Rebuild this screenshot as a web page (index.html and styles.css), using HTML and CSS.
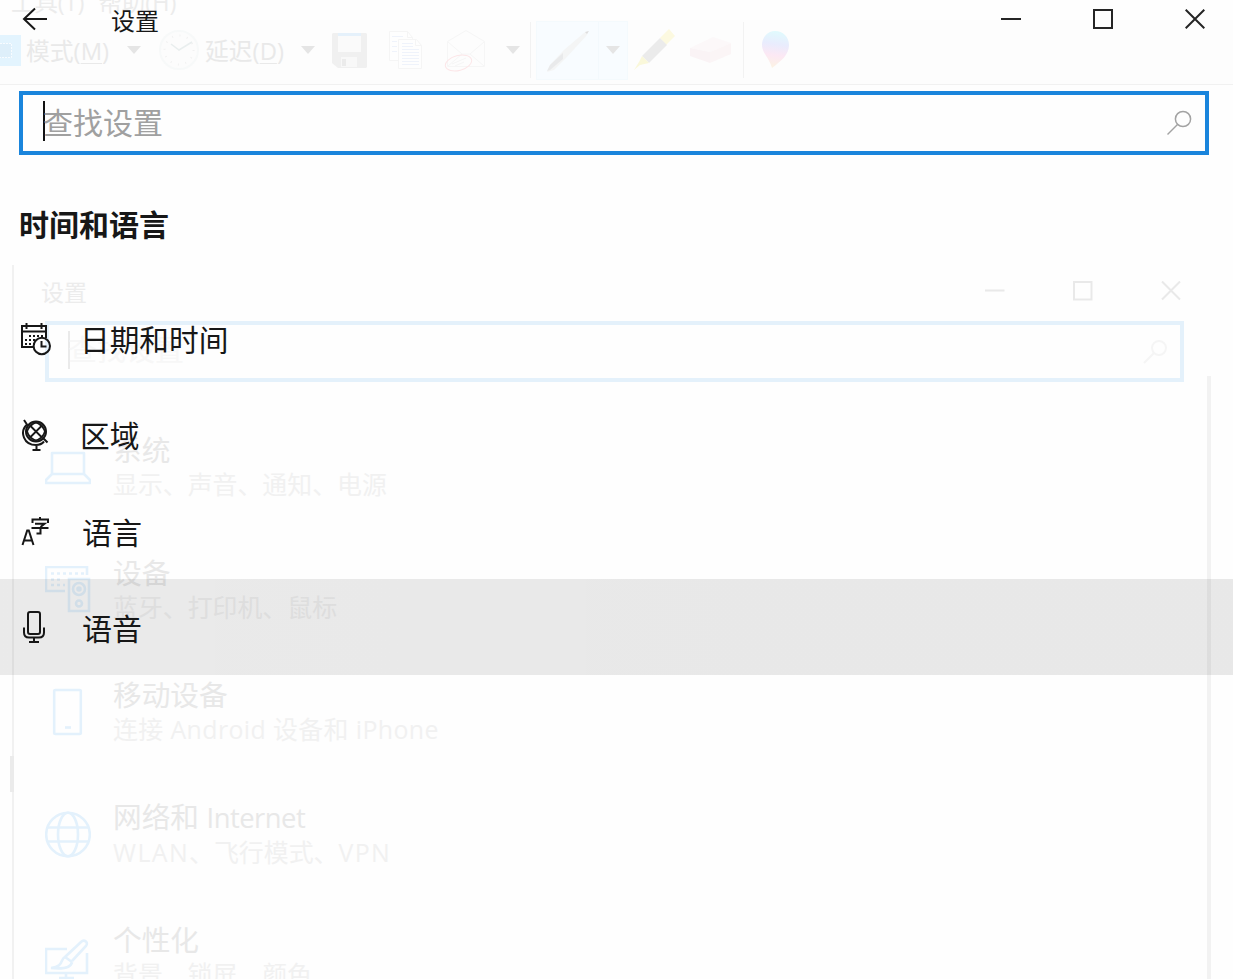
FILE: index.html
```html
<!DOCTYPE html>
<html lang="zh-CN">
<head>
<meta charset="utf-8">
<title>设置</title>
<link rel="stylesheet" href="styles.css">
</head>
<body>
<div class="screen">
  <!-- Windows behind, seen through the translucent panel -->
  <div class="backdrop" aria-hidden="true">
    <div class="app-menu"><span>工具(T)</span><span>帮助(H)</span></div>
    <div class="toolbar">
      <svg class="tile" width="21" height="31" viewBox="0 0 21 31"><rect width="21" height="31" fill="#e3f4fe"/><path d="M0 8.500H11.500V22.500H0" fill="#deeffa" stroke="#f8fcff" stroke-width="1" stroke-dasharray="2 1"/></svg>
      <span class="tool-text mode">模式(<u>M</u>)</span>
      <i class="arrow a1"></i>
      <svg class="clock" width="42" height="42" viewBox="0 0 42 42" fill="none"><circle cx="21" cy="21" r="19" fill="#fcfcfc" stroke="#f7f9f9" stroke-width="2"/><circle cx="21" cy="21" r="14.500" stroke="#f1f1f1" stroke-width="2" stroke-dasharray="1 6.600"/><path d="M13 15l8 6 13-8" stroke="#e9eeee" stroke-width="1.500"/></svg>
      <span class="tool-text delay">延迟(<u>D</u>)</span>
      <i class="arrow a2"></i>
      <svg class="save" width="35" height="35" viewBox="0 0 35 35"><path d="M1 0h33l1 1v33l-1 1H6l-6-5V1z" fill="#f0f0f0"/><path d="M6 3h23v16H6z" fill="#fafafa"/><path d="M6 0h23v3H6z" fill="#e5f1fb"/><path d="M9 24h16v10H9z" fill="#f8f8f8"/><path d="M10 26h4v7h-4z" fill="#ebebeb"/></svg>
      <svg class="copy" width="34" height="38" viewBox="0 0 34 38" fill="none" stroke="#f5f5f5"><path d="M.5.500h18l5 6v23H.500z" fill="#fefefe"/><path d="M9.500 8.500h18l5 6v23h-23z" fill="#fefefe"/><path d="M26.500 8.500v6h6M18.500.500v6h5"/><path d="M13 12.500h11M13 15.500h11M13 18.500h17M13 21.500h17M13 24.500h17M13 27.500h17M13 30.500h17M13 33.500h17M3 5.500h11M3 10.500h5M3 15.500h5M3 20.500h5" stroke="#eff3fb"/></svg>
      <svg class="mail" width="43" height="43" viewBox="0 0 43 43" fill="none" stroke="#f6f6f6"><path d="M3.500 12.500L22 1.500l18.500 11v25h-37zL18 25h8l14.500-12.500M26 25l14 12M18 25L4 37"/><ellipse cx="14.500" cy="34" rx="13.500" ry="7.500" transform="rotate(-15 14.500 34)" stroke="#fce6e8"/><path d="M8 35l14-6M11 37l9-4"/></svg>
      <i class="arrow a3"></i>
      <i class="sep s1"></i>
      <div class="pen-tool">
        <svg width="62" height="59" viewBox="0 0 62 59"><path d="M48 13l4-2-1 4-22 24-11 11-7 2 3-7 14-15z" fill="#f4f5f5"/><path d="M27 33v6L14 50l-3 1 3-6z" fill="#e9eaeb"/><path d="M49 12l4-1-2 3z" fill="#dedede"/></svg>
        <div class="pen-drop"><i class="arrow"></i></div>
      </div>
      <svg class="marker" width="42" height="42" viewBox="0 0 42 42"><path d="M27 9l9-9 6 7-9 9z" fill="#fcf9e0"/><path d="M9 27l18-18 7 7-18 18z" fill="#ebebeb"/><path d="M9 27l7 7-9 2-6 5 5-8z" fill="#faf8da"/></svg>
      <svg class="eraser" width="42" height="26" viewBox="0 0 42 26"><path d="M0 11L23 0l18 6-21 9z" fill="#fcf8f9"/><path d="M0 11l20 4v11L0 19z" fill="#faf3f5"/><path d="M20 15l21-9v11l-21 9z" fill="#fbf5f6"/></svg>
      <i class="sep s2"></i>
      <svg class="paint" width="28" height="38" viewBox="0 0 28 38"><defs><linearGradient id="pg" x1=".5" y1="0" x2=".4" y2="1"><stop offset="0" stop-color="#e0fafd"/><stop offset=".35" stop-color="#e9ecfd"/><stop offset=".65" stop-color="#fce8f4"/><stop offset="1" stop-color="#fcf3e3"/></linearGradient></defs><path d="M13 0C6 0 0 6 0 14c0 8 7 12 10 23 9-7 17-13 17-23C27 6 21 0 13 0z" fill="url(#pg)"/></svg>
    </div>

    <div class="ghost">
      <div class="ghost-bar">
        <span>设置</span>
        <div class="ghost-controls">
          <svg width="20" height="20" viewBox="0 0 20 20"><path d="M0 9.500h19.500"/></svg>
          <svg width="20" height="20" viewBox="0 0 20 20"><path d="M1 1h17.500v17.500H1z"/></svg>
          <svg width="20" height="20" viewBox="0 0 20 20"><path d="M1 .500l18 18M19 .500l-18 18"/></svg>
        </div>
      </div>
      <div class="ghost-search">
        <span>查找设置</span>
        <svg width="24" height="24" viewBox="0 0 24 24"><circle cx="16" cy="8" r="7"/><path d="M11 13L1 23"/></svg>
      </div>
      <div class="ghost-body">
        <div class="ghost-list">
          <div class="ghost-item">
            <svg width="46" height="50" viewBox="0 0 46 50"><path d="M7 10h32v21H7zM7 31l-6 6v3h44v-3l-6-6" stroke-linejoin="round"/></svg>
            <div><p class="g-title">系统</p><p class="g-sub">显示、声音、通知、电源</p></div>
          </div>
          <div class="ghost-item">
            <svg width="46" height="50" viewBox="0 0 46 50"><path d="M20 25H1V1h41v8M24 13h20v32H24z"/><circle cx="34" cy="23" r="6"/><circle cx="34" cy="23" r="1.500"/><circle cx="34" cy="37.500" r="3"/><path d="M6 7.500h33M6 13.500h12M6 19h14" stroke-dasharray="3 3"/></svg>
            <div><p class="g-title">设备</p><p class="g-sub">蓝牙、打印机、鼠标</p></div>
          </div>
          <div class="ghost-item">
            <svg width="46" height="50" viewBox="0 0 46 50"><rect x="9.200" y="2" width="26.600" height="44" rx="1"/><path d="M20 39.500h6"/></svg>
            <div><p class="g-title">移动设备</p><p class="g-sub latin-wide">连接 Android 设备和 iPhone</p></div>
          </div>
          <div class="ghost-item">
            <svg width="46" height="50" viewBox="0 0 46 50"><circle cx="23" cy="23.500" r="21.800"/><ellipse cx="23" cy="23.500" rx="10" ry="21.800"/><path d="M3 16.500h40M3 30.500h40"/></svg>
            <div><p class="g-title">网络和 <span class="narrow">Internet</span></p><p class="g-sub"><span class="caps">WLAN</span>、飞行模式、<span class="caps">VPN</span></p></div>
          </div>
          <div class="ghost-item">
            <svg width="46" height="50" viewBox="0 0 46 50"><path d="M22 16H1v24h41V20M21 40v6M14 45h15"/><path d="M20 24L36 9c3-3 8 0 5 4L27 28M20 24l7 5M20 24c-5 2-1 10-14 11 10 1 20 1 21-6"/></svg>
            <div><p class="g-title">个性化</p><p class="g-sub">背景、锁屏、颜色</p></div>
          </div>
        </div>
        <div class="ghost-scroll"></div>
      </div>
    </div>
  </div>

  <main class="window">
    <header class="title-bar">
      <svg class="back" width="26" height="24" viewBox="0 0 26 24"><path d="M2 12H25M13 1.500L2 12l11 10.500"/></svg>
      <h1 class="title">设置</h1>
      <div class="controls">
        <svg width="20" height="20" viewBox="0 0 20 20"><path d="M0 10h20"/></svg>
        <svg width="20" height="20" viewBox="0 0 20 20"><path d="M1 1h18v18H1z"/></svg>
        <svg width="20" height="20" viewBox="0 0 20 20"><path d="M.7.700l18.600 18.600M19.300.700L.700 19.300"/></svg>
      </div>
    </header>

    <div class="search">
      <span class="caret"></span><span class="placeholder">查找设置</span>
      <svg width="26" height="26" viewBox="0 0 26 26"><circle cx="17" cy="9" r="7.600"/><path d="M11.500 14.500L1.500 24.500"/></svg>
    </div>

    <h2 class="heading">时间和语言</h2>

    <nav class="menu">
      <a class="item">
        <svg width="32" height="34" viewBox="0 0 32 34"><path d="M14 25H2V4h24v12M2 9.500h24M6.500 1v6M21.500 1v6"/><path d="M9 14h15M5 18h12M5 22h10" stroke-dasharray="2 2"/><circle cx="21.800" cy="24" r="8.200"/><path d="M21.500 19v5.500h5"/></svg>
        <span>日期和时间</span>
      </a>
      <a class="item">
        <svg width="32" height="34" viewBox="0 0 32 34"><circle cx="16" cy="13.500" r="10"/><path d="M4 2l3 4.500C-1 14 4 27 16 27q5 0 8-3.500M23 20l4.500 4.500M16.500 27v4.500M12.500 32h8"/><path d="M9.500 7L22.500 20M14.500 4Q23 6 25.500 15M6.500 12Q9 21 17.500 23M22.500 7L9.500 20M17.500 4Q9 6 6.500 15M25.500 12Q23 21 14.500 23" stroke-width="1.800"/></svg>
        <span>区域</span>
      </a>
      <a class="item">
        <svg width="32" height="34" viewBox="0 0 32 34"><path d="M2.500 31L7.200 16.500H8.800L13.500 31M4.500 26.500h7"/><path d="M12.500 9V5.500h15.500V9M20 3v2.500M15 9.800h9.500L20.500 13M11.500 14h17M20.500 13.500v6h-4"/></svg>
        <span class="wide">语言</span>
      </a>
      <a class="item selected">
        <svg width="32" height="34" viewBox="0 0 32 34"><rect x="8" y="2" width="12" height="22" rx="2"/><path d="M4 17.500v5q0 5 5 5h10q5 0 5-5v-5M14 27.500V32M9 32h10"/></svg>
        <span class="wide">语音</span>
      </a>
    </nav>
  </main>
</div>
</body>
</html>
```

FILE: styles.css
```css
* { box-sizing: border-box; }

body {
  margin: 0;
  background: #fefefe;
  color: #171717;
  font-family: "Open Sans", "Noto Sans CJK SC", sans-serif;
  font-weight: 400;
}

h1, h2, p { margin: 0; font-weight: 400; }
svg { display: block; flex: none; }

.screen {
  position: relative;
  width: 1233px;
  height: 979px;
  overflow: hidden;
}

/* Backdrop */
.backdrop {
  position: absolute;
  inset: 0;
  overflow: hidden;
  display: flex;
  flex-direction: column;
}

.app-menu {
  height: 20px;
  flex: none;
  display: flex;
  gap: 14px;
  padding-left: 11px;
  font-size: 23.4px;
  line-height: 4px;
  color: #ececec;
  white-space: nowrap;
}

.toolbar {
  height: 65px;
  flex: none;
  display: flex;
  align-items: center;
  padding-bottom: 4px;
  background: #fdfdfd;
  border-bottom: 1px solid #f1f1f1;
}

.tool-text {
  flex: none;
  margin-left: 5px;
  padding-top: 2px;
  font-size: 23.8px;
  line-height: 36px;
  color: #e9e9e9;
  white-space: nowrap;
}
.tool-text u { text-decoration-thickness: 1px; text-underline-offset: 3px; }
.mode { width: 85px; }
.delay { width: 80px; }

.arrow {
  flex: none;
  width: 14px;
  height: 8px;
  background: #e5e5e5;
  clip-path: polygon(0 0, 100% 0, 50% 100%);
}
.a1 { margin-left: 16px; }
.clock { margin-left: 17px; }
.a2 { margin-left: 16px; }
.save { margin-left: 17px; }
.copy { margin-left: 22px; }
.mail { margin-left: 21px; }
.a3 { margin-left: 19px; }
.sep { flex: none; width: 1px; height: 56px; background: #f2f2f2; }
.s1 { margin-left: 10px; }
.s2 { margin-left: 11px; }

.pen-tool {
  flex: none;
  display: flex;
  width: 92px;
  height: 59px;
  margin-left: 5px;
  background: #f8fcff;
  border: 1px solid #f4fafd;
}
.pen-tool > svg { margin-left: -1px; margin-top: -2px; }
.pen-drop {
  flex: 1;
  display: flex;
  align-items: center;
  justify-content: center;
  border-left: 1px solid #f3f9fd;
}
.marker { margin-left: 5px; }
.eraser { margin-left: 15px; }
.paint { margin-left: 18px; }

.ghost {
  position: relative;
  flex: 1;
  min-height: 0;
  margin: 180px 22px 0 12px;
  border-left: 2px solid #f1f1f1;
  display: flex;
  flex-direction: column;
}
/* Scrollbar thumb of the window beneath, showing at the left edge */
.ghost::before {
  content: "";
  position: absolute;
  left: -4px;
  top: 491px;
  width: 4px;
  height: 36px;
  background: #ebebeb;
}
.ghost svg { fill: none; stroke: #e3f1fc; stroke-width: 2.6; }

.ghost-bar {
  height: 56px;
  flex: none;
  display: flex;
  justify-content: space-between;
  align-items: center;
  padding: 0 30px 4px 27px;
  font-size: 23px;
  line-height: 30px;
  color: #ececec;
}
.ghost-bar > span { padding-top: 2px; }
.ghost-controls { display: flex; gap: 68px; }
.ghost-controls svg { stroke: #e9e9e9; stroke-width: 2; }

.ghost-search {
  flex: none;
  display: flex;
  justify-content: space-between;
  align-items: center;
  height: 61px;
  margin: 0 27px 0 31px;
  padding: 0 13px 3px 19px;
  border: 4px solid #e4f1fb;
  font-size: 29px;
  line-height: 38px;
  color: #f7f7f7;
}
.ghost-search span { border-left: 2px solid #eaeaea; text-indent: -2px; }
.ghost-search svg { stroke: #f5f5f5; stroke-width: 2; margin-top: 3px; }

.ghost-body {
  flex: 1;
  min-height: 0;
  display: flex;
  justify-content: space-between;
}
.ghost-list { padding: 42px 0 0 31px; }
.ghost-item {
  display: flex;
  align-items: center;
  gap: 22px;
  height: 122.5px;
  padding-bottom: 34px;
}
.ghost-item > div { margin-top: -1px; }
.g-title { font-size: 28.7px; line-height: 34px; color: #e8e8e8; }
.g-sub { font-size: 24.9px; line-height: 35px; color: #f1f1f1; }
.g-title, .g-sub { white-space: nowrap; }
.latin-wide { letter-spacing: 0.4px; }
.caps { letter-spacing: 1.4px; }
.narrow { font-size: 27.4px; letter-spacing: -0.5px; }
.ghost-scroll { width: 4px; margin-top: -6px; background: #f2f2f2; }

/* Foreground window */
.window { position: relative; }

.title-bar {
  height: 91px;
  display: flex;
  align-items: flex-start;
  padding: 7px 28px 0 22px;
}
.title-bar svg, .search svg, .item svg { fill: none; stroke: #171717; stroke-width: 2; }
.title { margin-left: 63px; font-size: 24px; line-height: 28px; }
.controls { display: flex; gap: 72px; margin: 2px 0 0 auto; }
.controls svg { stroke: #252525; }

.search {
  display: flex;
  align-items: center;
  height: 64px;
  margin: 0 24px 0 19px;
  padding: 0 13px 0 20px;
  border: 4px solid #1a85dc;
  background: #fefefe;
}
.caret { width: 2px; height: 40px; margin: -4px -2px 0 0; background: #111; }
.placeholder { font-size: 30px; line-height: 40px; color: #a0a0a0; }
.search svg { margin-left: auto; stroke: #a3a3a3; stroke-width: 1.5; }

.heading {
  padding: 50px 0 46px 19px;
  font-size: 30px;
  line-height: 40px;
  font-weight: 700;
}

.item {
  display: flex;
  align-items: center;
  gap: 28px;
  height: 96px;
  padding-left: 20px;
  font-size: 29.7px;
  line-height: 40px;
}
.item span { padding-top: 2px; }
.item .wide { padding: 3px 0 0 2px; font-size: 30px; }
.selected { background: linear-gradient(90deg, rgba(0, 0, 0, 0.079), rgba(0, 0, 0, 0.087) 60%); }
```
